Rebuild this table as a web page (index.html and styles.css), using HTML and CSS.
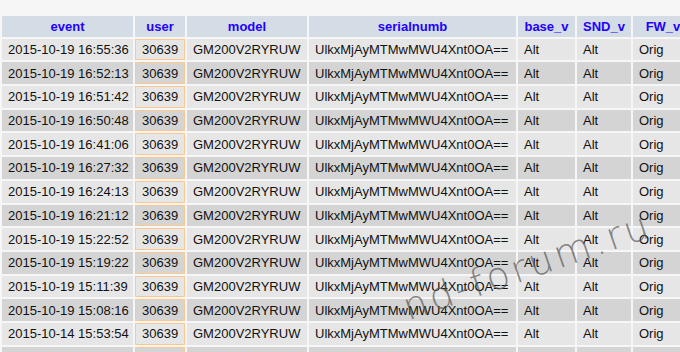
FILE: index.html
```html
<!DOCTYPE html>
<html lang="ru">
<head>
    <meta charset="UTF-8">
    <title>events</title>
    <link rel="stylesheet" href="styles.css">
</head>
<body>
    <table class="log">
        <thead>
            <tr>
                <th class="c-event">event</th>
                <th class="c-user">user</th>
                <th class="c-model">model</th>
                <th class="c-serial">serialnumb</th>
                <th class="c-base">base_v</th>
                <th class="c-snd">SND_v</th>
                <th class="c-fw">FW_v</th>
            </tr>
        </thead>
        <tbody>
            <tr><td>2015-10-19 16:55:36</td><td class="user">30639</td><td>GM200V2RYRUW</td><td>UlkxMjAyMTMwMWU4Xnt0OA==</td><td>Alt</td><td>Alt</td><td>Orig</td></tr>
            <tr><td>2015-10-19 16:52:13</td><td class="user">30639</td><td>GM200V2RYRUW</td><td>UlkxMjAyMTMwMWU4Xnt0OA==</td><td>Alt</td><td>Alt</td><td>Orig</td></tr>
            <tr><td>2015-10-19 16:51:42</td><td class="user">30639</td><td>GM200V2RYRUW</td><td>UlkxMjAyMTMwMWU4Xnt0OA==</td><td>Alt</td><td>Alt</td><td>Orig</td></tr>
            <tr><td>2015-10-19 16:50:48</td><td class="user">30639</td><td>GM200V2RYRUW</td><td>UlkxMjAyMTMwMWU4Xnt0OA==</td><td>Alt</td><td>Alt</td><td>Orig</td></tr>
            <tr><td>2015-10-19 16:41:06</td><td class="user">30639</td><td>GM200V2RYRUW</td><td>UlkxMjAyMTMwMWU4Xnt0OA==</td><td>Alt</td><td>Alt</td><td>Orig</td></tr>
            <tr><td>2015-10-19 16:27:32</td><td class="user">30639</td><td>GM200V2RYRUW</td><td>UlkxMjAyMTMwMWU4Xnt0OA==</td><td>Alt</td><td>Alt</td><td>Orig</td></tr>
            <tr><td>2015-10-19 16:24:13</td><td class="user">30639</td><td>GM200V2RYRUW</td><td>UlkxMjAyMTMwMWU4Xnt0OA==</td><td>Alt</td><td>Alt</td><td>Orig</td></tr>
            <tr><td>2015-10-19 16:21:12</td><td class="user">30639</td><td>GM200V2RYRUW</td><td>UlkxMjAyMTMwMWU4Xnt0OA==</td><td>Alt</td><td>Alt</td><td>Orig</td></tr>
            <tr><td>2015-10-19 15:22:52</td><td class="user">30639</td><td>GM200V2RYRUW</td><td>UlkxMjAyMTMwMWU4Xnt0OA==</td><td>Alt</td><td>Alt</td><td>Orig</td></tr>
            <tr><td>2015-10-19 15:19:22</td><td class="user">30639</td><td>GM200V2RYRUW</td><td>UlkxMjAyMTMwMWU4Xnt0OA==</td><td>Alt</td><td>Alt</td><td>Orig</td></tr>
            <tr><td>2015-10-19 15:11:39</td><td class="user">30639</td><td>GM200V2RYRUW</td><td>UlkxMjAyMTMwMWU4Xnt0OA==</td><td>Alt</td><td>Alt</td><td>Orig</td></tr>
            <tr><td>2015-10-19 15:08:16</td><td class="user">30639</td><td>GM200V2RYRUW</td><td>UlkxMjAyMTMwMWU4Xnt0OA==</td><td>Alt</td><td>Alt</td><td>Orig</td></tr>
            <tr><td>2015-10-14 15:53:54</td><td class="user">30639</td><td>GM200V2RYRUW</td><td>UlkxMjAyMTMwMWU4Xnt0OA==</td><td>Alt</td><td>Alt</td><td>Orig</td></tr>
            <tr><td>2015-10-14 15:46:50</td><td class="user">30639</td><td>GM200V2RYRUW</td><td>UlkxMjAyMTMwMWU4Xnt0OA==</td><td>Alt</td><td>Alt</td><td>Orig</td></tr>
        </tbody>
    </table>
    <div class="watermark">nd-forum.ru</div>
</body>
</html>
```

FILE: styles.css
```css
body, html {
    margin: 0;
    padding: 0;
    height: 100%;
    overflow: hidden;
    background: #f6f6f6;
    font-family: 'Liberation Sans', Arial, sans-serif;
    font-size: 13px;
    color: #111;
}
body {
    position: relative;
}
.log {
    margin-top: 14px;
    border-spacing: 2px;
    table-layout: fixed;
    width: 695px;
}
.log th, .log td {
    box-sizing: border-box;
    padding: 0 6px;
    white-space: nowrap;
    overflow: hidden;
}
.log th {
    height: 20.7px;
    background: #d4dce6;
    color: #2200ff;
    font-weight: bold;
    text-align: center;
}
.log td {
    height: 21.7px;
    text-align: left;
}
.log tbody tr:nth-child(odd) td {
    background: #e6e6e6;
}
.log tbody tr:nth-child(even) td {
    background: #d4d4d4;
}
.log td.user {
    text-align: center;
    border: 1px solid #fcc892;
}
.c-event { width: 131px; }
.c-user { width: 50px; }
.c-model { width: 120px; }
.c-serial { width: 207px; }
.c-base { width: 57px; }
.c-snd { width: 54px; }
.c-fw { width: 60px; }

/* водяной знак поверх таблицы */
.watermark {
    position: absolute;
    left: 527px;
    top: 266px;
    transform: translate(-50%, -50%) rotate(-19deg);
    font-family: 'DejaVu Sans', sans-serif;
    font-weight: 200;
    font-size: 38px;
    letter-spacing: 3px;
    color: rgba(85, 85, 85, 0.7);
    white-space: nowrap;
    pointer-events: none;
}
```
